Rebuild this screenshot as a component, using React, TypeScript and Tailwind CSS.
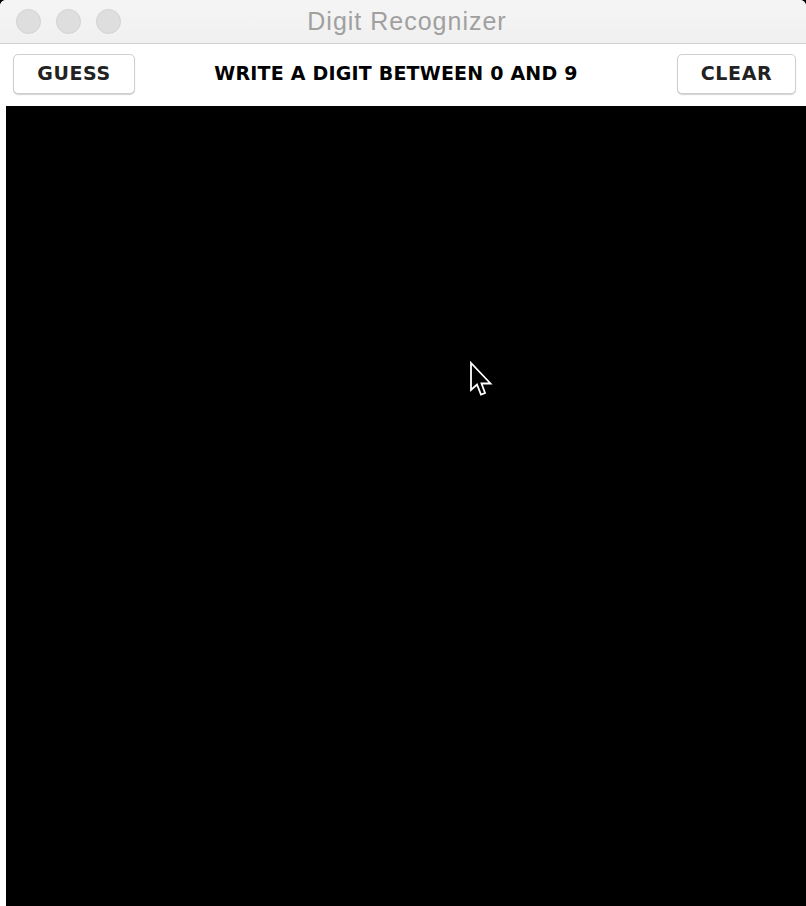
import React from "react";

const TrafficLight: React.FC = () => (
  <span className="block w-[25px] h-[25px] rounded-full bg-[#dedede] border border-[#d2d2d2]" />
);

const ToolButton: React.FC<{ label: string; className?: string }> = ({ label, className }) => (
  <button
    className={
      "h-[40px] rounded-[5px] bg-white border border-[#cfcfcf] shadow-[0_1px_1px_rgba(0,0,0,0.18)] text-[19px] font-bold text-[#222] tracking-[0.6px] " +
      (className ?? "")
    }
    style={{ fontFamily: '"DejaVu Sans", Verdana, sans-serif' }}
  >
    {label}
  </button>
);

const App: React.FC = () => {
  return (
    <div className="w-[806px] h-[906px] bg-black overflow-hidden">
      <div className="flex flex-col h-full rounded-tl-[6px] rounded-tr-[6px] overflow-hidden bg-white">
        <div className="relative h-[44px] flex items-center bg-gradient-to-b from-[#f6f5f5] to-[#f1f0f0] border-b border-[#d1d1d1]">
          <div className="flex gap-[15px] pl-[16px]">
            <TrafficLight />
            <TrafficLight />
            <TrafficLight />
          </div>
          <div
            className="absolute inset-0 flex items-center justify-center pl-[8px] pt-[1px] text-[25px] tracking-[1px] text-[#a0a0a0]"
            style={{ fontFamily: '"Liberation Sans", Arial, sans-serif' }}
          >
            Digit Recognizer
          </div>
        </div>

        <div className="h-[62px] flex items-center justify-between pl-[13px] pr-[10px] pb-[3px]">
          <ToolButton label="GUESS" className="w-[122px]" />
          <span
            className="text-[19px] font-bold text-black tracking-[0.2px] pr-[20px]"
            style={{ fontFamily: '"DejaVu Sans", Verdana, sans-serif' }}
          >
            WRITE A DIGIT BETWEEN 0 AND 9
          </span>
          <ToolButton label="CLEAR" className="w-[119px]" />
        </div>

        <div className="flex-1 flex">
          <div className="w-[6px] bg-white" />
          <div className="relative flex-1 bg-black">
            <svg
              className="absolute left-[463px] top-[255px]"
              width="26"
              height="38"
              viewBox="0 0 26 38"
            >
              <path
                d="M2 2 L2 29 L8 23.5 L12 33.5 L16 32 L12.5 22.5 L21.5 22.5 Z"
                fill="black"
                stroke="white"
                strokeWidth="1.8"
                strokeLinejoin="miter"
              />
            </svg>
          </div>
        </div>
      </div>
    </div>
  );
};

export default App;
